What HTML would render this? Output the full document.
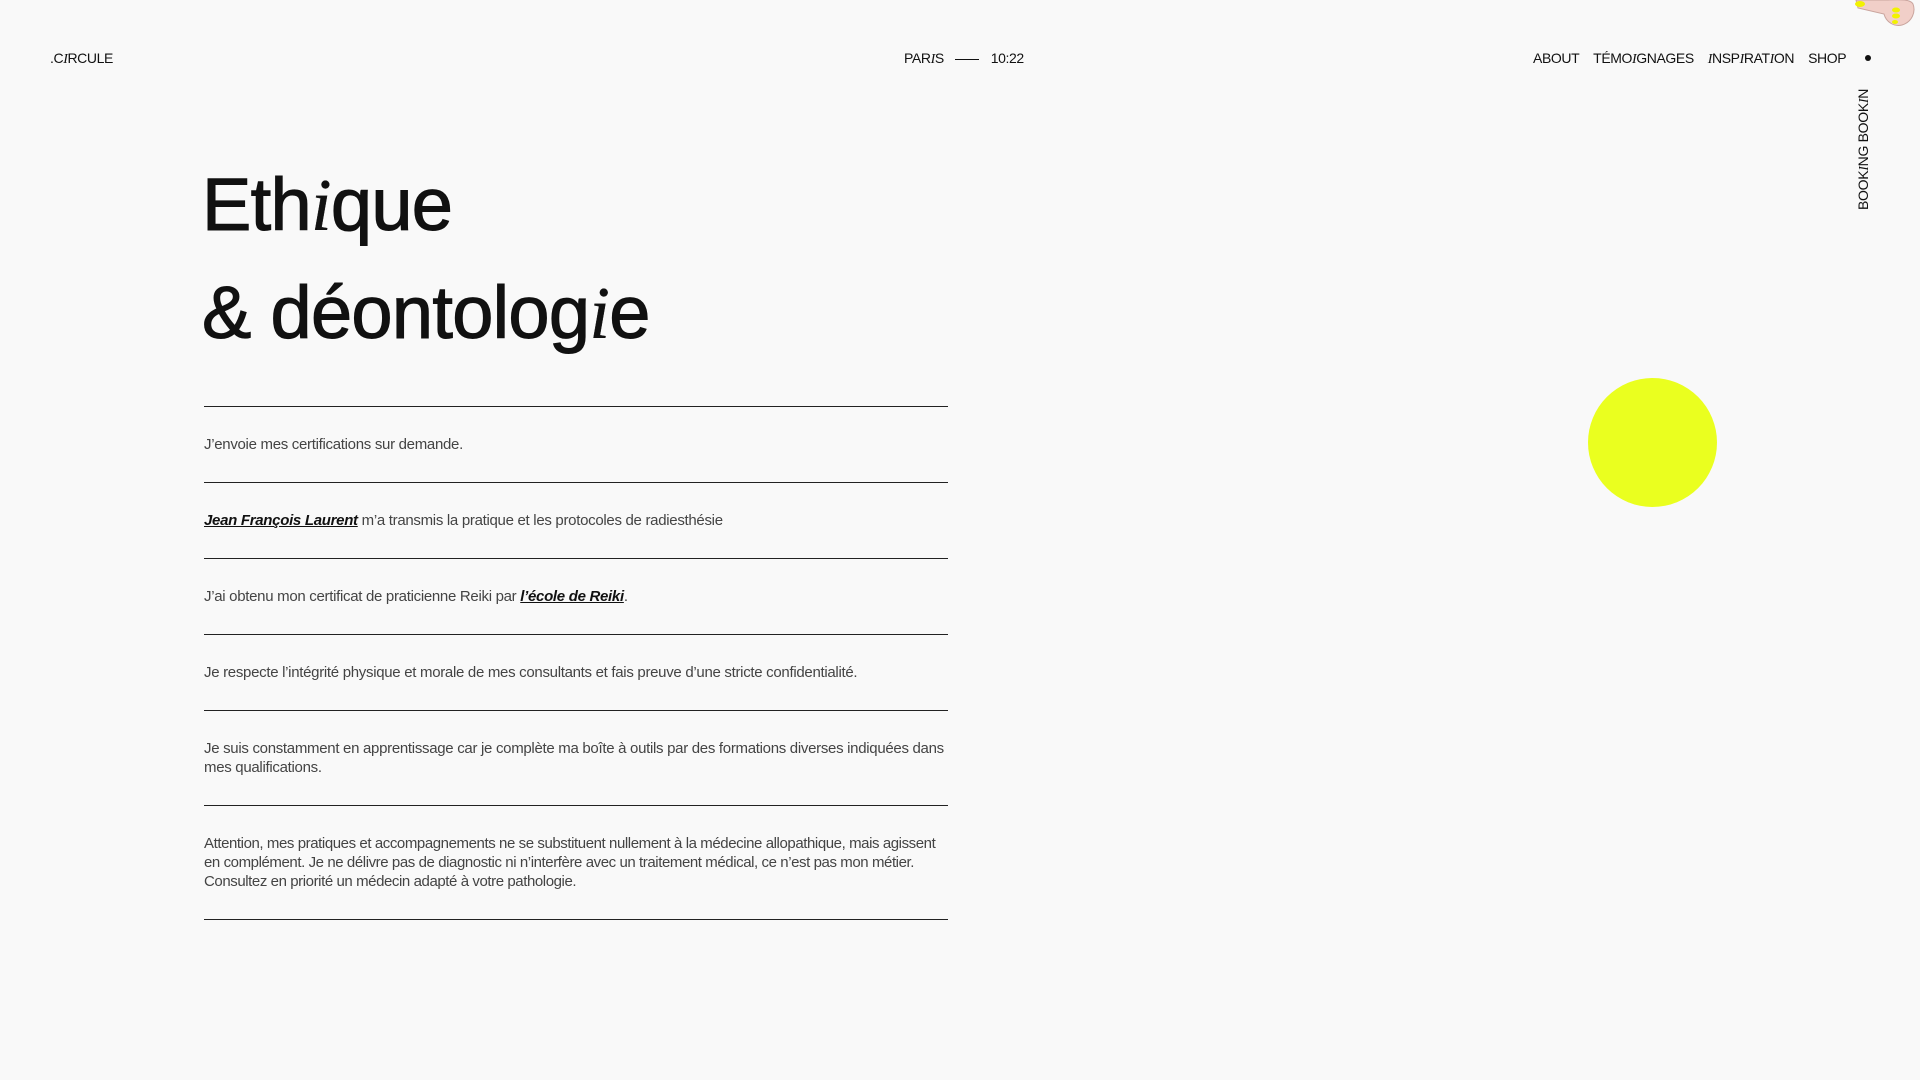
<!DOCTYPE html>
<html><head><meta charset="utf-8"><style>
*{margin:0;padding:0;box-sizing:border-box}
body{width:1920px;height:1080px;background:#f9f9f9;font-family:"Liberation Sans",sans-serif;color:#111;position:relative;overflow:hidden}
.nav{position:absolute;top:50px;font-size:14px;letter-spacing:-0.4px;white-space:nowrap}
.i{font-family:"Liberation Serif",serif;font-style:italic}
h1{position:absolute;left:202px;font-weight:400;font-size:74px;letter-spacing:-0.7px;line-height:1;-webkit-text-stroke:1.1px #111}
h1 .i{-webkit-text-stroke:0.4px #111}
.rows{position:absolute;left:204px;top:406px;width:744px}
.row{border-top:1.5px solid #222;color:#444;font-size:15px;letter-spacing:-0.3px;line-height:19px;padding:28px 0 28px}
.row:last-child{border-bottom:1.5px solid #222;letter-spacing:-0.42px}
.row a{color:#111;font-weight:700;font-style:italic;text-decoration:underline}
</style></head><body>
<div class="nav" style="left:50px">.C<span class="i">I</span>RCULE</div>
<div class="nav" style="left:904px">PAR<span class="i">I</span>S <span style="display:inline-block;width:24px;border-top:1px solid #111;vertical-align:middle;margin:0 8px"></span> 10:22</div>
<div class="nav" style="left:1533px;word-spacing:0">ABOUT&nbsp;&nbsp;&nbsp;&nbsp;TÉMO<span class="i">I</span>GNAGES&nbsp;&nbsp;&nbsp;&nbsp;<span class="i">I</span>NSP<span class="i">I</span>RAT<span class="i">I</span>ON&nbsp;&nbsp;&nbsp;&nbsp;SHOP</div>
<div style="position:absolute;left:1865px;top:55px;width:6px;height:6px;border-radius:50%;background:#111"></div>
<div style="position:absolute;left:1855px;top:210px;transform:rotate(-90deg);transform-origin:0 0;font-size:14px;letter-spacing:-0.3px;white-space:nowrap">BOOK<span class="i">I</span>NG BOOK<span class="i">I</span>N</div>
<svg style="position:absolute;left:1850px;top:0" width="70" height="28" viewBox="0 0 70 28"><path d="M6 0 L34 0 C44 0 60 -2 63 4 C66 12 62 22 52 25 C44 27 36 22 34 14 L8 8 Z" fill="#f1cfc8" stroke="#c9a49d" stroke-width="1"/><ellipse cx="10" cy="4" rx="5" ry="3" fill="#f2f200"/><ellipse cx="46" cy="10" rx="4" ry="2.5" fill="#f2f200"/><ellipse cx="46" cy="16" rx="4" ry="2.5" fill="#f2f200"/><ellipse cx="45" cy="22" rx="3" ry="2" fill="#f2f200"/></svg>
<h1 style="top:168px">Eth<span class="i">i</span>que</h1>
<h1 style="top:276px">&amp; déontolog<span class="i">i</span>e</h1>
<div style="position:absolute;left:1588px;top:378px;width:129px;height:129px;border-radius:50%;background:#eaff1f"></div>
<div class="rows">
<div class="row">J’envoie mes certifications sur demande.</div>
<div class="row"><a>Jean François Laurent</a> m’a transmis la pratique et les protocoles de radiesthésie</div>
<div class="row">J’ai obtenu mon certificat de praticienne Reiki par <a>l’école de Reiki</a>.</div>
<div class="row">Je respecte l’intégrité physique et morale de mes consultants et fais preuve d’une stricte confidentialité.</div>
<div class="row">Je suis constamment en apprentissage car je complète ma boîte à outils par des formations diverses indiquées dans mes qualifications.</div>
<div class="row">Attention, mes pratiques et accompagnements ne se substituent nullement à la médecine allopathique, mais agissent en complément. Je ne délivre pas de diagnostic ni n’interfère avec un traitement médical, ce n’est pas mon métier. Consultez en priorité un médecin adapté à votre pathologie.</div>
</div>
</body></html>
